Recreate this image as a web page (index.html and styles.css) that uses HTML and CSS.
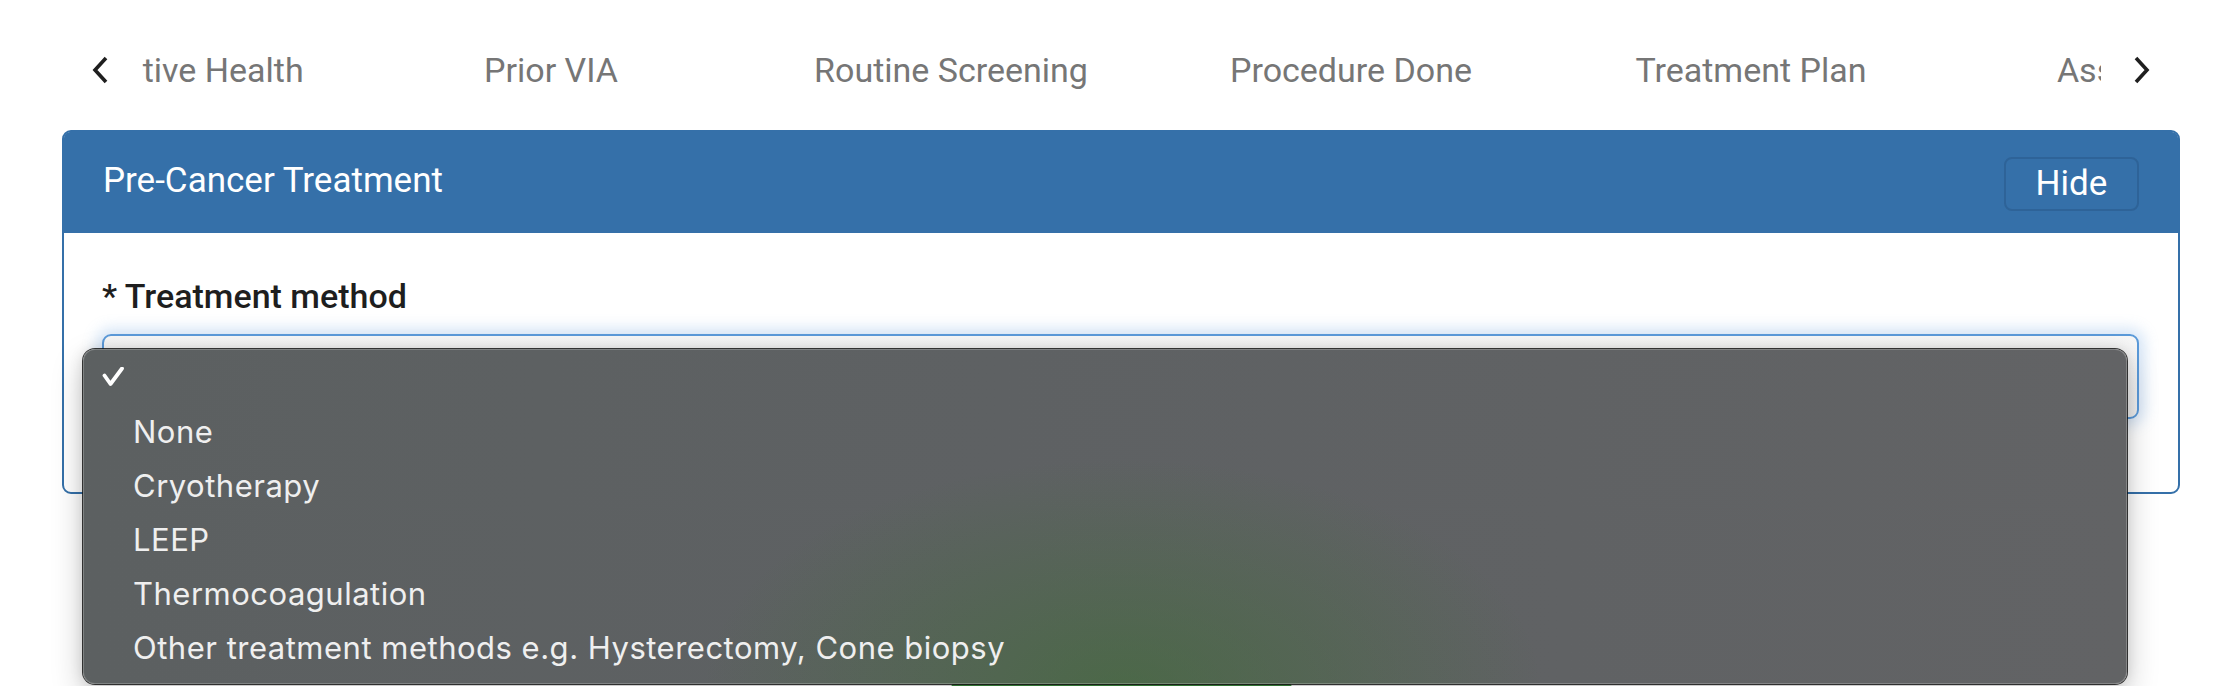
FILE: index.html
```html
<!DOCTYPE html>
<html lang="en">
<head>
<meta charset="utf-8">
<title>Pre-Cancer Treatment</title>
<link rel="stylesheet" href="styles.css">
</head>
<body>
<div class="page">
  <nav class="tabs">
    <button class="chev chev-prev" aria-label="Previous">
      <svg width="20" height="28" viewBox="0 0 20 28"><path d="M15 2 L4 14 L15 26" fill="none" stroke="#1f1f1f" stroke-width="3.6" stroke-linejoin="miter"/></svg>
    </button>
    <div class="tabs-viewport">
      <div class="tabs-track">
        <span class="tab">Reproductive Health</span>
        <span class="tab">Prior VIA</span>
        <span class="tab">Routine Screening</span>
        <span class="tab">Procedure Done</span>
        <span class="tab">Treatment Plan</span>
        <span class="tab">Assessment</span>
        <span class="tab">Follow Up</span>
      </div>
    </div>
    <button class="chev chev-next" aria-label="Next">
      <svg width="20" height="28" viewBox="0 0 20 28"><path d="M5 2 L16 14 L5 26" fill="none" stroke="#1f1f1f" stroke-width="3.6" stroke-linejoin="miter"/></svg>
    </button>
  </nav>

  <section class="panel">
    <header class="panel-head">
      <h2 class="panel-title">Pre-Cancer Treatment</h2>
      <button class="btn-hide">Hide</button>
    </header>
    <div class="panel-body">
      <label class="field-label">* Treatment method</label>
      <div class="select-wrap">
        <div class="select-box"></div>
        <ul class="menu">
          <li class="menu-item selected"><span class="check"><svg width="22" height="22" viewBox="0 0 22 22"><path d="M2.5 8.5 L8.5 17 L20 1.5" fill="none" stroke="#ffffff" stroke-width="3.8" stroke-linecap="round" stroke-linejoin="round"/></svg></span><span class="menu-text"></span></li>
          <li class="menu-item"><span class="check"></span><span class="menu-text">None</span></li>
          <li class="menu-item"><span class="check"></span><span class="menu-text">Cryotherapy</span></li>
          <li class="menu-item"><span class="check"></span><span class="menu-text">LEEP</span></li>
          <li class="menu-item"><span class="check"></span><span class="menu-text">Thermocoagulation</span></li>
          <li class="menu-item"><span class="check"></span><span class="menu-text">Other treatment methods e.g. Hysterectomy, Cone biopsy</span></li>
        </ul>
      </div>
    </div>
  </section>

  <div class="actions">
    <button class="btn-green">Save</button>
  </div>
</div>
</body>
</html>
```

FILE: styles.css
```css
html, body {
  margin: 0;
  padding: 0;
  background: #ffffff;
  overflow: hidden;
}

body {
  font-family: Roboto, "Liberation Sans", Arial, sans-serif;
}

.page {
  padding: 50px 48px 0 62px;
}

/* ---------- tabs ---------- */
.tabs {
  display: flex;
  align-items: center;
  height: 40px;
  margin-bottom: 40px;
}

.chev {
  height: 40px;
  display: flex;
  align-items: center;
  background: none;
  border: 0;
  padding: 0;
}

.chev-prev {
  flex: 0 0 80px;
  justify-content: flex-start;
  padding-left: 29px;
  box-sizing: border-box;
}

.chev-next {
  flex: 0 0 79px;
  justify-content: flex-start;
  padding-left: 30px;
  box-sizing: border-box;
}

.tabs-viewport {
  flex: 1 1 auto;
  overflow: hidden;
  height: 40px;
}

.tabs-track {
  display: flex;
  margin-left: -191px;
  white-space: nowrap;
}

.tab {
  flex: 0 0 400px;
  text-align: center;
  font-size: 34px;
  line-height: 40px;
  color: #767676;
}

/* ---------- panel ---------- */
.panel {
  border: 2px solid #3570a9;
  border-radius: 9px;
  background: #ffffff;
}

.panel-head {
  display: flex;
  align-items: center;
  justify-content: space-between;
  height: 101px;
  padding: 0 39px;
  background: #3570a9;
  border-radius: 6px 6px 0 0;
}

.panel-title {
  margin: 0;
  padding-bottom: 4px;
  font-size: 35px;
  font-weight: 400;
  color: #ffffff;
}

.btn-hide {
  width: 135px;
  height: 54px;
  margin-top: 2px;
  background: transparent;
  border: 2px solid #2e6398;
  border-radius: 8px;
  color: #ffffff;
  font-family: Roboto, "Liberation Sans", Arial, sans-serif;
  font-size: 35px;
  padding: 0;
}

.panel-body {
  padding: 43px 39px 73px 38px;
}

.field-label {
  display: block;
  font-size: 34px;
  font-weight: 500;
  color: #1e1e1e;
  margin-bottom: 18px;
}

.select-wrap {
  position: relative;
}

.select-box {
  height: 81px;
  border: 2px solid #5b9ad9;
  border-radius: 9px;
  background: linear-gradient(#f7f7f7, #efefef);
  box-shadow: 0 0 14px 6px rgba(110, 165, 225, 0.28);
}

/* ---------- native-like dropdown menu ---------- */
.menu {
  position: absolute;
  left: -19px;
  top: 15px;
  width: 2044px;
  height: 335px;
  box-sizing: border-box;
  margin: 0;
  padding: 2px 0 0 0;
  list-style: none;
  border-radius: 12px;
  background:
    radial-gradient(ellipse 420px 230px at 1040px 340px, rgba(60, 110, 50, 0.55), rgba(60, 110, 50, 0) 100%),
    linear-gradient(90deg, #5c6061 0%, #5e6163 45%, #626365 100%);
  box-shadow:
    0 0 0 1px rgba(20, 20, 20, 0.85),
    inset 0 0 0 1px rgba(255, 255, 255, 0.22),
    0 12px 32px rgba(0, 0, 0, 0.22),
    0 0 14px rgba(0, 0, 0, 0.12);
  font-family: Inter, "Noto Sans", "Liberation Sans", sans-serif;
  font-size: 31px;
  letter-spacing: 0.5px;
  color: #efefef;
  z-index: 5;
}

.menu-item {
  display: flex;
  align-items: center;
  height: 54px;
  line-height: 54px;
}

.check {
  flex: 0 0 50px;
  display: flex;
  align-items: center;
  padding-left: 19px;
  box-sizing: border-box;
  height: 54px;
}

.menu-text {
  white-space: nowrap;
}

/* ---------- actions ---------- */
.actions {
  display: flex;
  justify-content: center;
  margin-top: 188px;
}

.btn-green {
  width: 341px;
  height: 54px;
  border: 0;
  border-radius: 6px;
  background: #3e8e41;
  color: #fff;
  font-size: 30px;
}
```
